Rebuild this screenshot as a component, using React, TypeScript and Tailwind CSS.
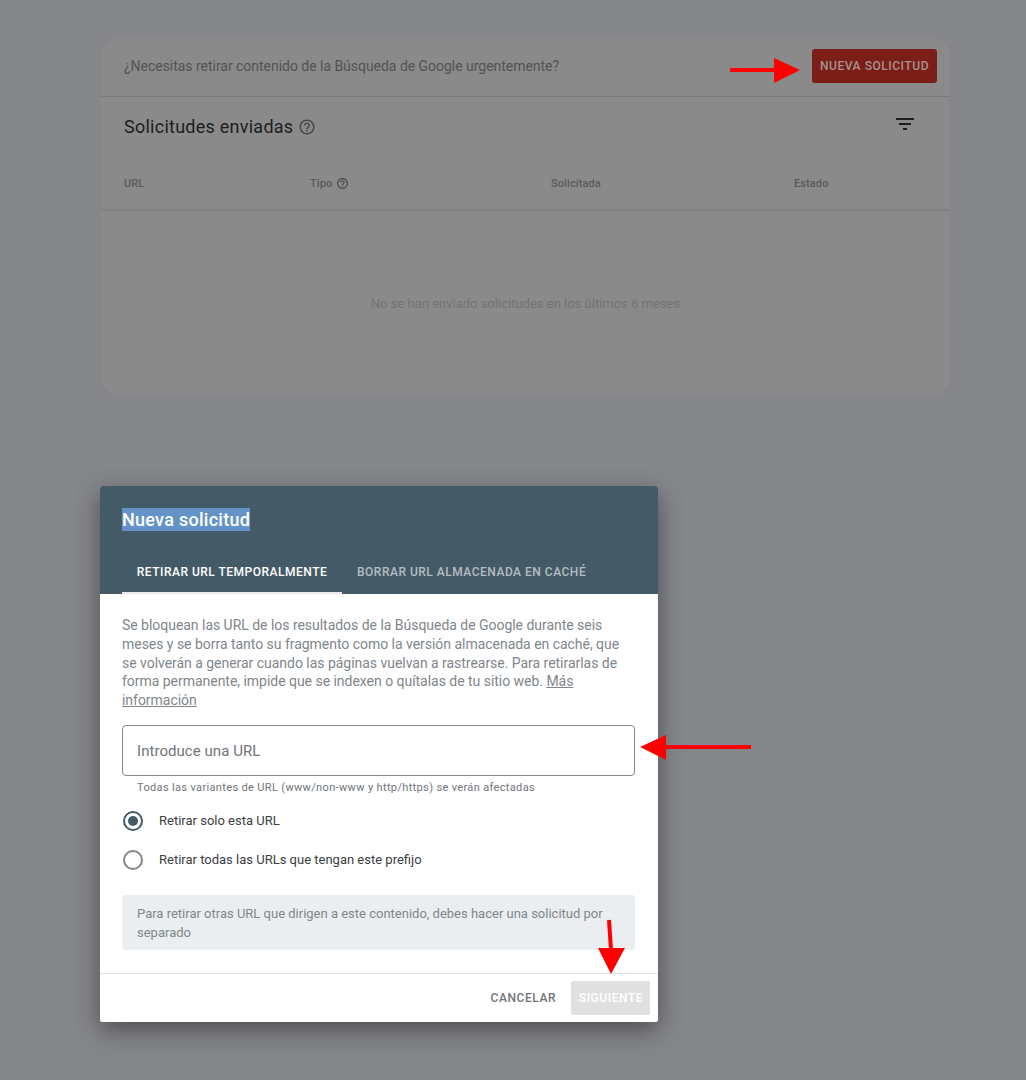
import { MdHelpOutline, MdFilterList } from "react-icons/md";

function Arrow({ className, head, line }: { className: string; head: string; line: [number, number, number, number] }) {
  return (
    <svg className={className} viewBox="0 0 1026 1080" width={1026} height={1080} aria-hidden="true">
      <line x1={line[0]} y1={line[1]} x2={line[2]} y2={line[3]} stroke="#fe0000" strokeWidth={4} />
      <polygon points={head} fill="#fe0000" />
    </svg>
  );
}

function Radio({ checked, label }: { checked?: boolean; label: string }) {
  return (
    <div className="flex items-center h-[20px] ml-[1px]">
      <span className={`flex items-center justify-center w-[20px] h-[20px] rounded-full border-2 ${checked ? "border-[#455a64]" : "border-[#80868b]"}`}>
        {checked && <span className="w-[10px] h-[10px] rounded-full bg-[#455a64]" />}
      </span>
      <span className="ml-[16px] text-[13px] text-[#3c4043]">{label}</span>
    </div>
  );
}

export default function App() {
  return (
    <div
      className="relative h-[1080px] overflow-hidden bg-[#85868a] pt-[37px] pl-[101px] text-[#202124]"
      style={{ fontFamily: "Roboto, 'Liberation Sans', sans-serif" }}
    >
      <section className="w-[849px] h-[359px] rounded-[20px] bg-[#8a8a8a] flex flex-col">
        <div className="h-[60px] shrink-0 flex items-center justify-between border-b border-[#797a7c] pl-[23px] pr-[13px]">
          <span className="text-[14px] tracking-[-0.03px] text-[#525355]">¿Necesitas retirar contenido de la Búsqueda de Google urgentemente?</span>
          <span className="flex items-center justify-center w-[125px] h-[34px] rounded-[3px] bg-[#7a1e17] text-[12px] font-medium tracking-[0.55px] text-[#a8928f] mb-[1px]">
            NUEVA SOLICITUD
          </span>
        </div>
        <div className="h-[60px] shrink-0 flex items-start justify-between pl-[23px] pr-[33px]">
          <div className="flex items-center gap-[5px] pt-[18px]">
            <span className="text-[18px] leading-[24px] tracking-[0.25px] text-[#1c1d1e]">Solicitudes enviadas</span>
            <MdHelpOutline className="w-[18px] h-[18px] text-[#47484a]" />
          </div>
          <MdFilterList className="w-[24px] h-[24px] mt-[15px] text-[#1c1d1e]" />
        </div>
        <div className="h-[54px] shrink-0 grid grid-cols-[186px_241px_243px_1fr] items-center border-b-2 border-[#7f8081] pl-[23px] pt-[2px] text-[11px] font-medium tracking-[0.1px] text-[#5a5b5d]">
          <span>URL</span>
          <span className="flex items-center gap-[4px]">
            Tipo <MdHelpOutline className="w-[13px] h-[13px] -mt-[1px] text-[#47484a]" />
          </span>
          <span>Solicitada</span>
          <span>Estado</span>
        </div>
        <div className="flex-1 flex justify-center pt-[84px] text-[13px] leading-[18px] text-[#737476]">
          No se han enviado solicitudes en los últimos 6 meses
        </div>
      </section>

      <section className="w-[558px] h-[536px] mt-[90px] -ml-[1px] rounded-[2px] bg-white flex flex-col shadow-[0_8px_24px_rgba(0,0,0,0.42)] overflow-hidden">
        <header className="h-[108px] shrink-0 bg-[#445a66] flex flex-col pl-[22px]">
          <div className="pt-[22px] h-[70px]">
            <span className="inline-block h-[23px] leading-[23px] bg-[#6494c7] text-[18px] font-medium tracking-[0.27px] text-white">Nueva solicitud</span>
          </div>
          <div className="flex flex-1 text-[12px] font-medium tracking-[0.5px]">
            <span className="w-[220px] flex items-center justify-center border-b-2 border-[#e8eaeb] pb-[4px] text-white">RETIRAR URL TEMPORALMENTE</span>
            <span className="pl-[15px] flex items-center pb-[6px] text-[#b5bdc1]">BORRAR URL ALMACENADA EN CACHÉ</span>
          </div>
        </header>
        <div className="flex-1 flex flex-col px-[22px] pt-[22px]">
          <p className="text-[14px] leading-[18.75px] tracking-[-0.03px] text-[#80868b]">
            Se bloquean las URL de los resultados de la Búsqueda de Google durante seis meses y se borra tanto su fragmento como la versión almacenada en caché, que se volverán a generar cuando las páginas vuelvan a rastrearse. Para retirarlas de forma permanente, impide que se indexen o quítalas de tu sitio web.{" "}
            <span className="underline">Más información</span>
          </p>
          <div className="mt-[15px] h-[51px] w-[513px] shrink-0 flex items-center rounded-[4px] border border-[#80868b] pl-[14px] pt-[1px] text-[15px] tracking-[0.05px] text-[#70757a]">
            Introduce una URL
          </div>
          <p className="mt-[5px] pl-[15px] text-[11px] leading-[13px] tracking-[0.35px] text-[#70757a]">
            Todas las variantes de URL (www/non-www y http/https) se verán afectadas
          </p>
          <div className="mt-[17px] flex flex-col gap-[19px]">
            <Radio checked label="Retirar solo esta URL" />
            <Radio label="Retirar todas las URLs que tengan este prefijo" />
          </div>
          <div className="mt-[25px] w-[513px] h-[55px] shrink-0 rounded-[3px] bg-[#ebeef0] px-[15px] pt-[9px] text-[13px] leading-[19px] text-[#80868b]">
            Para retirar otras URL que dirigen a este contenido, debes hacer una solicitud por separado
          </div>
        </div>
        <footer className="h-[49px] shrink-0 border-t border-[#e0e0e0] flex items-center justify-end pr-[8px] text-[12px] font-medium tracking-[0.55px]">
          <span className="text-[#70757a] mr-[15px]">CANCELAR</span>
          <span className="flex items-center justify-center w-[79px] h-[34px] pl-[1px] rounded-[2px] bg-[#e0e0e0] text-white">SIGUIENTE</span>
        </footer>
      </section>

      <Arrow className="absolute left-0 top-0 pointer-events-none" line={[730, 70, 776, 70]} head="774,58 800,70 774,83" />
      <Arrow className="absolute left-0 top-0 pointer-events-none" line={[751, 747, 664, 747]} head="666,735 640,747 666,760" />
      <Arrow className="absolute left-0 top-0 pointer-events-none" line={[609, 920, 611, 950]} head="598,948 625,948 611,974" />
    </div>
  );
}
